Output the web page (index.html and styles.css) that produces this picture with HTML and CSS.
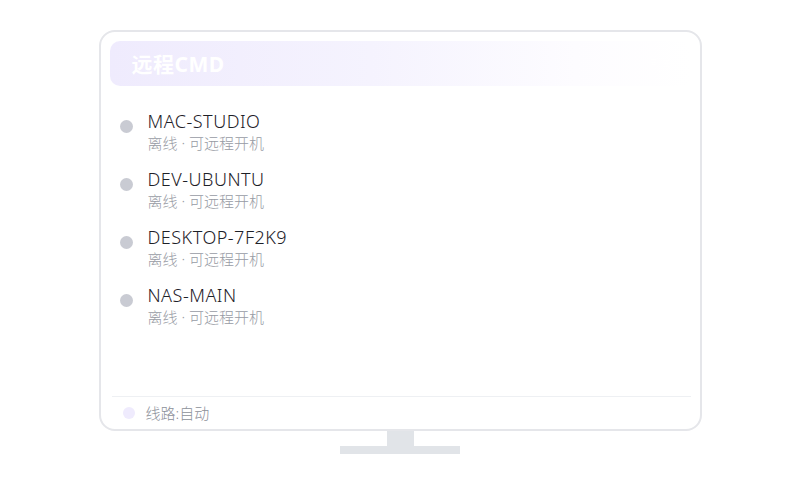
FILE: index.html
```html
<!DOCTYPE html>
<html lang="zh-CN">
<head>
<meta charset="utf-8">
<title>远程CMD</title>
<link rel="stylesheet" href="styles.css">
</head>
<body>
<div class="page">
  <div class="monitor">
    <div class="screen">
      <div class="header">
        <span class="title">远程CMD</span>
        <span class="header-action">刷新</span>
      </div>
      <ul class="devices">
        <li class="device">
          <span class="dot"></span>
          <div class="info">
            <div class="name">MAC-STUDIO</div>
            <div class="status">离线 · 可远程开机</div>
          </div>
        </li>
        <li class="device">
          <span class="dot"></span>
          <div class="info">
            <div class="name">DEV-UBUNTU</div>
            <div class="status">离线 · 可远程开机</div>
          </div>
        </li>
        <li class="device">
          <span class="dot"></span>
          <div class="info">
            <div class="name">DESKTOP-7F2K9</div>
            <div class="status">离线 · 可远程开机</div>
          </div>
        </li>
        <li class="device">
          <span class="dot"></span>
          <div class="info">
            <div class="name">NAS-MAIN</div>
            <div class="status">离线 · 可远程开机</div>
          </div>
        </li>
      </ul>
      <div class="footer">
        <span class="route-dot"></span>
        <span class="route">线路:自动</span>
      </div>
    </div>
    <div class="neck"></div>
    <div class="base"></div>
  </div>
</div>
</body>
</html>
```
FILE: styles.css
```css
* {
  box-sizing: border-box;
}

html, body {
  margin: 0;
  padding: 0;
  background: #ffffff;
}

body {
  font-family: "Noto Sans", "Noto Sans CJK SC", sans-serif;
  width: 800px;
  height: 500px;
  overflow: hidden;
}

.page {
  padding-top: 30px;
  display: flex;
  justify-content: center;
}

.monitor {
  display: flex;
  flex-direction: column;
  align-items: center;
}

.screen {
  width: 603px;
  height: 401px;
  border: 2px solid #e5e6ea;
  border-radius: 16px;
  padding: 9px 9px 0 9px;
  display: flex;
  flex-direction: column;
  background: #ffffff;
}

.header {
  height: 45px;
  border-radius: 10px;
  background: linear-gradient(90deg, #efebfd 0%, #f5f3fe 45%, #fdfcff 80%, #ffffff 100%);
  display: flex;
  align-items: center;
  justify-content: space-between;
  padding: 0 14px 0 22px;
}

.title {
  color: #ffffff;
  font-size: 21px;
  font-weight: 700;
  line-height: 26px;
  letter-spacing: 0.5px;
  margin-top: 1px;
}

.header-action {
  color: #ffffff;
  font-size: 14px;
}

.devices {
  list-style: none;
  margin: 0;
  padding: 23px 0 0 10px;
  flex: 1;
  display: flex;
  flex-direction: column;
  gap: 14px;
}

.device {
  display: flex;
  align-items: flex-start;
  gap: 15px;
}

.dot {
  width: 13px;
  height: 13px;
  border-radius: 50%;
  background: #c9cbd3;
  margin-top: 11px;
  flex-shrink: 0;
}

.name {
  font-size: 18px;
  line-height: 24px;
  font-weight: 300;
  letter-spacing: 0.5px;
  color: #1d2027;
}

.status {
  font-size: 15px;
  line-height: 20px;
  font-weight: 300;
  color: #979ba4;
}

.footer {
  height: 33px;
  margin-left: 2px;
  border-top: 1px solid #eef0f3;
  display: flex;
  align-items: center;
  gap: 11px;
  padding-left: 11px;
}

.route-dot {
  width: 12px;
  height: 12px;
  border-radius: 50%;
  background: #efebfd;
}

.route {
  font-size: 15px;
  line-height: 20px;
  font-weight: 300;
  color: #8c9099;
}

.neck {
  width: 27px;
  height: 15px;
  background: #e1e4e8;
}

.base {
  width: 120px;
  height: 8px;
  background: #e1e4e8;
}
```
